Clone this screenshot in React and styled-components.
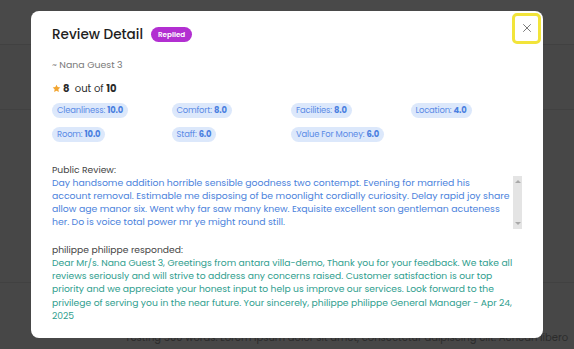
import React from 'react';
import styled, { createGlobalStyle } from 'styled-components';

const GlobalStyles = createGlobalStyle`
  * { box-sizing: border-box; }
  html, body {
    margin: 0;
    padding: 0;
    width: 574px;
    height: 349px;
    overflow: hidden;
    font-family: "Poppins", "Open Sans", "Liberation Sans", sans-serif;
  }
`;

// page behind the modal (dimmed)
const Page = styled.div`
  width: 574px;
  height: 349px;
  overflow: hidden;
  background: #f6f6f6;
`;

const PageHeader = styled.div`
  height: 45px;
  background: #ffffff;
  border-bottom: 1px solid #e2e2e2;
`;

const PageRow = styled.div`
  height: ${p => p.h}px;
  border-bottom: 1px solid #e4e4e4;
`;

const PageText = styled.p`
  margin: 0;
  padding: 48px 0 0 125px;
  font-size: 10px;
  line-height: 14px;
  color: #9a9a9a;
  white-space: nowrap;
`;

const Overlay = styled.div`
  position: fixed;
  inset: 0;
  background: rgba(0, 0, 0, 0.715);
  display: flex;
  align-items: center;
  justify-content: center;
`;

const Modal = styled.div`
  position: relative;
  width: 512px;
  background: #fff;
  border-radius: 8px;
  padding: 15px 21px 16px 21px;
  display: flex;
  flex-direction: column;
`;

const CloseButton = styled.button`
  position: absolute;
  top: 2px;
  right: 2px;
  width: 29px;
  height: 31px;
  border: 3px solid #f2e43a;
  border-radius: 5px;
  background: #fff;
  display: flex;
  align-items: center;
  justify-content: center;
  padding: 0;
  cursor: pointer;
`;

const TitleRow = styled.div`
  display: flex;
  align-items: center;
  gap: 8px;
  height: 18px;
`;

const Title = styled.h2`
  margin: 0;
  font-size: 13.6px;
  font-weight: 500;
  color: #1e1e1e;
`;

const Badge = styled.span`
  background: #b22fd1;
  color: #fff;
  font-size: 7.2px;
  font-weight: 600;
  padding: 0 7px;
  height: 15px;
  line-height: 15px;
  border-radius: 8px;
`;

const Guest = styled.div`
  margin-top: 15px;
  font-size: 9.4px;
  color: #7a7a7a;
  line-height: 12px;
`;

const Rating = styled.div`
  margin-top: 12px;
  display: flex;
  align-items: center;
  font-size: 10px;
  color: #2a2a2a;
  line-height: 12px;
  svg { margin-right: 2px; }
  b { font-weight: 700; }
`;

const Scores = styled.div`
  margin-top: 8px;
  display: grid;
  grid-template-columns: repeat(4, 119.5px);
  row-gap: 9px;
`;

const Chip = styled.span`
  justify-self: start;
  height: 15px;
  line-height: 15px;
  padding: 0 5px;
  border-radius: 8px;
  background: #dce8fb;
  color: #5a8ae6;
  font-size: 8.4px;
  letter-spacing: -0.15px;
  b { font-weight: 700; color: #4a7fe0; }
`;

const Label = styled.div`
  font-size: 9.2px;
  line-height: 13px;
  color: #454545;
  margin-top: ${p => p.top}px;
`;

const ReviewBox = styled.div`
  display: flex;
  height: 53px;
  gap: 1px;
`;

const ReviewText = styled.div`
  flex: 1;
  min-width: 0;
  overflow: hidden;
  font-size: 9.3px;
  line-height: 13px;
  color: #4b82dc;
`;

const ReviewLine = styled.div`
  white-space: nowrap;
`;

const ScrollTrack = styled.div`
  width: 9px;
  flex: none;
  background: #e4e4e4;
  display: flex;
  flex-direction: column;
  justify-content: space-between;
  align-items: center;
  padding: 4px 0;
`;

const Arrow = styled.span`
  width: 0;
  height: 0;
  border-left: 3px solid transparent;
  border-right: 3px solid transparent;
  ${p => (p.down ? 'border-top: 3px solid #a9a9a9;' : 'border-bottom: 3px solid #a9a9a9;')}
`;

const Reply = styled.div`
  font-size: 9.2px;
  line-height: 13.2px;
  color: #2f9e8e;
`;

const scores = [
  ['Cleanliness', '10.0'],
  ['Comfort', '8.0'],
  ['Facilities', '8.0'],
  ['Location', '4.0'],
  ['Room', '10.0'],
  ['Staff', '6.0'],
  ['Value For Money', '6.0'],
];

const reviewLines = [
  'Day handsome addition horrible sensible goodness two contempt. Evening for married his',
  'account removal. Estimable me disposing of be moonlight cordially curiosity. Delay rapid joy share',
  'allow age manor six. Went why far saw many knew. Exquisite excellent son gentleman acuteness',
  'her. Do is voice total power mr ye might round still.',
];

const Star = () => (
  <svg width="9" height="9" viewBox="0 0 24 24">
    <path
      fill="#f2a531"
      d="M12 1.8l3.1 6.5 7.1.9-5.2 4.9 1.3 7.1L12 17.8l-6.3 3.4 1.3-7.1L1.8 9.2l7.1-.9z"
    />
  </svg>
);

export default function App() {
  return (
    <>
      <GlobalStyles />
      <Page>
        <PageHeader />
        <PageRow h={65} />
        <PageRow h={173} />
        <PageText>
          Testing 500 words. Lorem ipsum dolor sit amet, consectetur adipiscing elit. Aenean libero
        </PageText>
      </Page>
      <Overlay>
        <Modal>
          <CloseButton aria-label="Close">
            <svg width="10" height="10" viewBox="0 0 12 12">
              <path d="M1.5 1.5l9 9M10.5 1.5l-9 9" stroke="#7a7a7a" strokeWidth="1.2" />
            </svg>
          </CloseButton>
          <TitleRow>
            <Title>Review Detail</Title>
            <Badge>Replied</Badge>
          </TitleRow>
          <Guest>~ Nana Guest 3</Guest>
          <Rating>
            <Star />
            <b>8</b>&nbsp;&nbsp;out of&nbsp;<b>10</b>
          </Rating>
          <Scores>
            {scores.map(([k, v]) => (
              <Chip key={k}>
                {k}: <b>{v}</b>
              </Chip>
            ))}
          </Scores>
          <Label top={21}>Public Review:</Label>
          <ReviewBox>
            <ReviewText>
              {reviewLines.map(line => (
                <ReviewLine key={line}>{line}</ReviewLine>
              ))}
            </ReviewText>
            <ScrollTrack>
              <Arrow />
              <Arrow down />
            </ScrollTrack>
          </ReviewBox>
          <Label top={14}>philippe philippe responded:</Label>
          <Reply>
            Dear Mr/s. Nana Guest 3, Greetings from antara villa-demo, Thank you for your feedback. We take all
            reviews seriously and will strive to address any concerns raised. Customer satisfaction is our top
            priority and we appreciate your honest input to help us improve our services. Look forward to the
            privilege of serving you in the near future. Your sincerely, philippe philippe General Manager - Apr 24,
            2025
          </Reply>
        </Modal>
      </Overlay>
    </>
  );
}
